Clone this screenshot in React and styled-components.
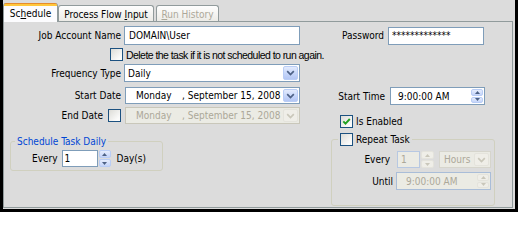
import React from "react";
import styled, { createGlobalStyle } from "styled-components";

const GlobalStyle = createGlobalStyle`
  html, body { margin: 0; padding: 0; background: #fff; }
  body {
    font-family: "DejaVu Sans Condensed", "DejaVu Sans", sans-serif;
    font-size: 10px;
    color: #000;
  }
  * { box-sizing: border-box; }
`;

const Window = styled.div`
  width: 518px;
  height: 212px;
  border: 3px solid #000;
  border-top: 0;
  background: #dcdcdc;
  display: flex;
  flex-direction: column;
  padding-right: 2px;
`;

const TabStrip = styled.div`
  height: 21px;
  flex: none;
  display: flex;
  align-items: flex-end;
  position: relative;
  z-index: 1;
`;

const Tab = styled.div`
  width: ${(p) => p.$w}px;
  height: ${(p) => (p.$active ? 19 : 16)}px;
  margin-bottom: ${(p) => (p.$active ? -1 : 0)}px;
  margin-left: ${(p) => p.$ml || 0}px;
  border: 1px solid #919b9c;
  border-bottom: 0;
  border-top: ${(p) => (p.$active ? "0" : "1px solid #919b9c")};
  border-radius: 3px 3px 0 0;
  background: ${(p) =>
    p.$active
      ? "linear-gradient(#e68b2c 0 1px, #ffc73c 1px 3px, #fcfcfe 3px)"
      : "linear-gradient(#fefefe, #ecebe6)"};
  color: ${(p) => (p.$disabled ? "#aca899" : "#000")};
  display: flex;
  align-items: center;
  justify-content: center;
  padding-top: ${(p) => (p.$active ? 2 : 1)}px;
  white-space: pre;
`;

const Panel = styled.div`
  flex: 1;
  margin-bottom: 1px;
  border: 1px solid #919b9c;
  background: #dcdcdc;
  display: flex;
  flex-direction: column;
  padding-top: 4px;
`;

const Row = styled.div`
  display: flex;
  align-items: center;
  height: ${(p) => p.$h}px;
  margin-top: ${(p) => p.$mt || 0}px;
  padding-left: ${(p) => p.$pl || 0}px;
  flex: none;
`;

const Label = styled.div`
  width: ${(p) => (p.$w ? `${p.$w}px` : "auto")};
  padding-left: ${(p) => p.$pl || 0}px;
  text-align: right;
  white-space: nowrap;
  flex: none;
`;

const LabelWithCheck = styled.div`
  width: ${(p) => p.$w}px;
  display: flex;
  justify-content: flex-end;
  align-items: center;
  gap: 5px;
  flex: none;
`;

const Field = styled.div`
  width: ${(p) => p.$w}px;
  height: ${(p) => p.$h}px;
  margin-left: ${(p) => p.$ml || 0}px;
  border: 1px solid ${(p) => p.$border || (p.$disabled ? "#c9c7ba" : "#7f9db9")};
  background: ${(p) => (p.$disabled ? "#ebebe4" : "#fff")};
  color: ${(p) => (p.$disabled ? "#aca899" : "#000")};
  display: flex;
  align-items: center;
  padding-left: ${(p) => p.$pl ?? 3}px;
  padding-right: 1px;
  flex: none;
  white-space: pre;
`;

const FieldText = styled.span`
  flex: 1;
  overflow: hidden;
`;

const DayPart = styled.span`
  display: inline-block;
  width: 46px;
`;

const DropButton = styled.div`
  width: 15px;
  align-self: stretch;
  margin: 1px 0;
  border-radius: 2px;
  border: 1px solid ${(p) => (p.$disabled ? "#e4e3dc" : "#b9cdf6")};
  background: ${(p) =>
    p.$disabled
      ? "#efeee8"
      : "linear-gradient(#e3ebfd, #c6d6fa 55%, #b4c7f4)"};
  display: flex;
  align-items: center;
  justify-content: center;
  flex: none;
`;

const SpinStack = styled.div`
  width: ${(p) => p.$w || 12}px;
  margin-left: ${(p) => p.$ml || 0}px;
  align-self: stretch;
  margin-top: ${(p) => (p.$inside ? 1 : 0)}px;
  margin-bottom: ${(p) => (p.$inside ? 1 : 0)}px;
  display: flex;
  flex-direction: column;
  gap: 1px;
  flex: none;
`;

const SpinHalf = styled.div`
  flex: 1;
  border-radius: 2px;
  border: 1px solid ${(p) => (p.$disabled ? "#e4e3dc" : "#b9cdf6")};
  background: ${(p) =>
    p.$disabled ? "#efeee8" : "linear-gradient(#e6edfd, #c4d4f9)"};
  display: flex;
  align-items: center;
  justify-content: center;
`;

const Check = styled.span`
  width: 13px;
  height: 13px;
  border: 1px solid #1c5180;
  background: linear-gradient(135deg, #dcdcd7, #fbfbfa 80%);
  display: inline-flex;
  align-items: center;
  justify-content: center;
  flex: none;
`;

const CheckText = styled.span`
  margin-left: ${(p) => p.$gap || 3}px;
  white-space: nowrap;
`;

const NarrowText = styled.span`
  margin-left: 3px;
  white-space: nowrap;
  font-family: "Liberation Sans", Arial, sans-serif;
  font-size: 10.5px;
  letter-spacing: -0.55px;
`;

const Bottom = styled.div`
  display: flex;
  margin-top: 5px;
`;

const Column = styled.div`
  width: ${(p) => (p.$w ? `${p.$w}px` : "auto")};
  flex: ${(p) => (p.$w ? "none" : "1")};
  display: flex;
  flex-direction: column;
`;

const Group = styled.fieldset`
  width: ${(p) => p.$w}px;
  margin: ${(p) => p.$mt}px 0 0 ${(p) => p.$ml}px;
  padding: 0 ${(p) => p.$px}px ${(p) => p.$pb}px ${(p) => p.$px}px;
  border: 1px solid #d0d0bf;
  border-radius: 3px;
  min-width: 0;
`;

const Legend = styled.legend`
  padding: 0 2px;
  color: ${(p) => p.$color || "#000"};
  line-height: 13px;
  display: flex;
  align-items: center;
`;

const Mnemonic = styled.span`
  text-decoration: underline;
  text-underline-offset: 1px;
`;

const Chevron = ({ disabled }) => (
  <svg width="9" height="6" viewBox="0 0 9 6">
    <path
      d="M1.2 1.2 L4.5 4.5 L7.8 1.2"
      fill="none"
      stroke={disabled ? "#c9c7ba" : "#4d6185"}
      strokeWidth="1.7"
    />
  </svg>
);

const Arrow = ({ up, disabled }) => (
  <svg width="5" height="3" viewBox="0 0 5 3">
    <path
      d={up ? "M0 3 L2.5 0 L5 3 Z" : "M0 0 L2.5 3 L5 0 Z"}
      fill={disabled ? "#c9c7ba" : "#4d6185"}
    />
  </svg>
);

const Spin = ({ disabled, inside, w, ml }) => (
  <SpinStack $inside={inside} $w={w} $ml={ml}>
    <SpinHalf $disabled={disabled}>
      <Arrow up disabled={disabled} />
    </SpinHalf>
    <SpinHalf $disabled={disabled}>
      <Arrow disabled={disabled} />
    </SpinHalf>
  </SpinStack>
);

const CheckBox = ({ checked }) => (
  <Check>
    {checked && (
      <svg width="9" height="9" viewBox="0 0 9 9">
        <path
          d="M1.3 4.3 L3.5 6.6 L7.8 2"
          fill="none"
          stroke="#21a121"
          strokeWidth="1.9"
        />
      </svg>
    )}
  </Check>
);

export default function App() {
  return (
    <>
      <GlobalStyle />
      <Window>
        <TabStrip>
          <Tab $active $w={55}>
            <span>
              Sc<Mnemonic>h</Mnemonic>edule
            </span>
          </Tab>
          <Tab $w={96}>
            <span>
              Process Flow <Mnemonic>I</Mnemonic>nput
            </span>
          </Tab>
          <Tab $w={63} $ml={2} $disabled>
            <span>
              <Mnemonic>R</Mnemonic>un History
            </span>
          </Tab>
        </TabStrip>
        <Panel>
          <Row $h={19}>
            <Label $w={117}>Job Account Name</Label>
            <Field $w={176} $h={19} $ml={3} $pl={4}>
              <FieldText>DOMAIN\User</FieldText>
            </Field>
            <Label $w={84}>Password</Label>
            <Field $w={96} $h={18} $ml={4} $pl={3}>
              <FieldText>*************</FieldText>
            </Field>
          </Row>
          <Row $h={13} $mt={3} $pl={106}>
            <CheckBox />
            <NarrowText>Delete the task if it is not scheduled to run again.</NarrowText>
          </Row>
          <Row $h={18} $mt={3}>
            <Label $w={117}>Frequency Type</Label>
            <Field $w={176} $h={18} $ml={3} $pl={3}>
              <FieldText>Daily</FieldText>
              <DropButton>
                <Chevron />
              </DropButton>
            </Field>
          </Row>
          <Bottom>
            <Column $w={296}>
              <Row $h={17}>
                <Label $w={117}>Start Date</Label>
                <Field $w={175} $h={17} $ml={4} $pl={10}>
                  <FieldText>
                    <DayPart>Monday</DayPart>, September 15, 2008
                  </FieldText>
                  <DropButton>
                    <Chevron />
                  </DropButton>
                </Field>
              </Row>
              <Row $h={17} $mt={3}>
                <LabelWithCheck $w={117}>
                  <span>End Date</span>
                  <CheckBox />
                </LabelWithCheck>
                <Field $w={175} $h={17} $ml={4} $pl={10} $disabled>
                  <FieldText>
                    <DayPart>Monday</DayPart>, September 15, 2008
                  </FieldText>
                  <DropButton $disabled>
                    <Chevron disabled />
                  </DropButton>
                </Field>
              </Row>
              <Group $w={153} $mt={11} $ml={6} $px={4} $pb={3}>
                <Legend $color="#0046d5">Schedule Task Daily</Legend>
                <Row $h={17} $mt={2}>
                  <Label $pl={17}>Every</Label>
                  <Field $w={36} $h={17} $ml={4} $pl={2}>
                    <FieldText>1</FieldText>
                  </Field>
                  <Spin w={12} ml={1} />
                  <CheckText $gap={6}>Day(s)</CheckText>
                </Row>
              </Group>
            </Column>
            <Column>
              <Row $h={18}>
                <Label $w={85}>Start Time</Label>
                <Field $w={95} $h={18} $ml={5} $pl={7}>
                  <FieldText>9:00:00 AM</FieldText>
                  <Spin inside w={12} />
                </Field>
              </Row>
              <Row $h={13} $mt={10} $pl={40}>
                <CheckBox checked />
                <CheckText>Is Enabled</CheckText>
              </Row>
              <Group $w={164} $mt={5} $ml={31} $px={6} $pb={15}>
                <Legend>
                  <CheckBox />
                  <CheckText>Repeat Task</CheckText>
                </Legend>
                <Row $h={17} $mt={5}>
                  <Label $w={52}>Every</Label>
                  <Field $w={23} $h={17} $ml={7} $pl={3} $disabled $border="#b7c8e2">
                    <FieldText>1</FieldText>
                  </Field>
                  <Spin disabled w={13} ml={1} />
                  <Field $w={52} $h={17} $ml={5} $pl={4} $disabled $border="#d6d5cc">
                    <FieldText>Hours</FieldText>
                    <DropButton $disabled>
                      <Chevron disabled />
                    </DropButton>
                  </Field>
                </Row>
                <Row $h={18} $mt={4}>
                  <Label $w={55}>Until</Label>
                  <Field $w={95} $h={18} $ml={3} $pl={9} $disabled $border="#a9bdd8">
                    <FieldText>9:00:00 AM</FieldText>
                    <Spin inside disabled w={12} />
                  </Field>
                </Row>
              </Group>
            </Column>
          </Bottom>
        </Panel>
      </Window>
    </>
  );
}
